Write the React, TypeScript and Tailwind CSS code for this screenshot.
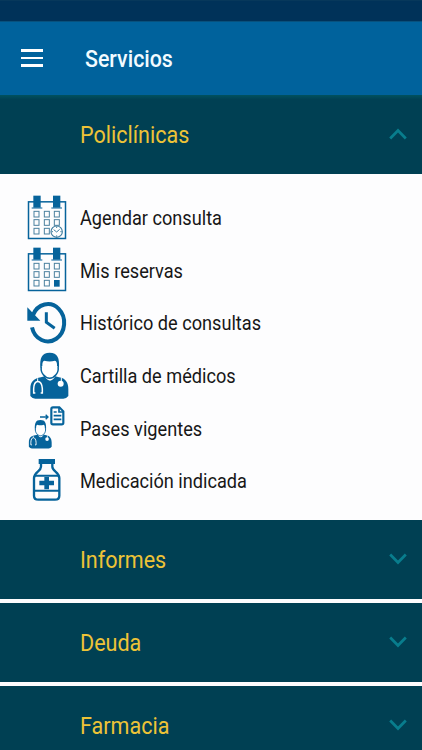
import { useState } from "react";
import type { ReactNode } from "react";
import clsx from "clsx";

interface Service {
  label: string;
  icon: ReactNode;
}

interface Section {
  id: string;
  label: string;
  items: Service[];
}

function Icon({ viewBox, children }: { viewBox: string; children: ReactNode }) {
  return (
    <svg viewBox={viewBox} className="w-[60px] h-full shrink-0 text-[#06639b]" fill="none" stroke="currentColor">
      {children}
    </svg>
  );
}

function CalendarBase() {
  return (
    <>
      <rect x="25.5" y="49.5" width="111" height="110" strokeWidth="4.5" />
      <path d="M35 68h32M94 68h32" strokeWidth="3.5" />
      <rect x="40" y="31" width="22" height="36" fill="currentColor" stroke="none" />
      <rect x="99" y="31" width="22" height="36" fill="currentColor" stroke="none" />
      {[78, 103, 129].map((y) =>
        [42, 73, 103].map((x) =>
          y === 129 && x === 103 ? null : (
            <rect key={`${x}-${y}`} x={x} y={y} width="15" height="17" stroke="#4b819f" strokeWidth="3" />
          )
        )
      )}
    </>
  );
}

const CalendarClockIcon = () => (
  <Icon viewBox="0 20 180 158">
    <CalendarBase />
    <circle cx="110" cy="139" r="17" fill="#fff" stroke="#3f7d9f" strokeWidth="3.5" />
    <path d="M101 133l9 7 9-8M110 124v4M110 150v4M95 139h4M121 139h4" stroke="#3f7d9f" strokeWidth="3" />
  </Icon>
);

const CalendarIcon = () => (
  <Icon viewBox="0 13 180 158">
    <g transform="translate(0 -7)">
      <CalendarBase />
      <rect x="102" y="128" width="17" height="20" fill="currentColor" stroke="none" />
    </g>
  </Icon>
);

const HistoryIcon = () => (
  <Icon viewBox="0 6 180 158">
    <path d="M39 60A49 56 0 1 1 36 97" strokeWidth="12" />
    <path d="M22 37v40h39z" fill="currentColor" stroke="none" />
    <path d="M79 52v30l25 18" strokeWidth="9" />
  </Icon>
);

function DoctorShape() {
  return (
    <>
      <path
        d="M31 152V130C31 109 42 99 63 96L74 93Q90 119 106 93L117 96C137 99 145 112 145 132V152Q139 160 130 160H46Q37 160 31 152Z"
        fill="currentColor"
        stroke="none"
      />
      <path d="M65 58C63 81 74 99 89 99S115 81 113 58Q105 46 89 46T65 58Z" fill="#fff" stroke="none" />
      <path d="M64 65C60 82 76 99 89 99S118 82 114 65" strokeWidth="4.5" />
      <path
        d="M61 68C59 38 65 22 89 22S119 38 117 68L111 62Q112 48 105 46Q89 51 73 46Q66 48 67 62Z"
        fill="currentColor"
        stroke="none"
      />
      <path d="M53 99V110" stroke="#fff" strokeWidth="3" />
      <path d="M46 143H41V130C42 101 65 101 67 130V143H62" stroke="#fff" strokeWidth="4.5" />
      <path d="M124 96V110" stroke="#fff" strokeWidth="3" />
      <circle cx="122" cy="115" r="9" fill="#fff" stroke="none" />
    </>
  );
}

const DoctorIcon = () => (
  <Icon viewBox="0 14 180 158">
    <DoctorShape />
  </Icon>
);

const ReferralIcon = () => (
  <Icon viewBox="0 7 180 158">
    <g transform="translate(8 47) scale(.6 .62)">
      <DoctorShape />
    </g>
    <path d="M60 52h23M77 45l7 7-7 7" strokeWidth="4" />
    <path d="M99 23h19l12 12v34q0 5-5 5H99q-5 0-5-5V28q0-5 5-5z" strokeWidth="6.5" />
    <path d="M117 24v13h12" strokeWidth="5" />
    <path d="M101 37h9M101 48h23M101 59h23" strokeWidth="5" />
  </Icon>
);

const MedicineIcon = () => (
  <Icon viewBox="0 15 180 158">
    <rect x="59" y="30" width="43" height="9" strokeWidth="6" fill="currentColor" />
    <path
      d="M63 41V50C63 64 42 66 42 84V137Q42 149 55 149H105Q118 149 118 137V84C118 66 97 64 97 50V41"
      strokeWidth="7"
    />
    <path d="M42 77H118M42 122H118" strokeWidth="6" />
    <path d="M80 81V118M58 99H102" strokeWidth="14" />
  </Icon>
);

const sections: Section[] = [
  {
    id: "policlinicas",
    label: "Policlínicas",
    items: [
      { label: "Agendar consulta", icon: <CalendarClockIcon /> },
      { label: "Mis reservas", icon: <CalendarIcon /> },
      { label: "Histórico de consultas", icon: <HistoryIcon /> },
      { label: "Cartilla de médicos", icon: <DoctorIcon /> },
      { label: "Pases vigentes", icon: <ReferralIcon /> },
      { label: "Medicación indicada", icon: <MedicineIcon /> },
    ],
  },
  { id: "informes", label: "Informes", items: [] },
  { id: "deuda", label: "Deuda", items: [] },
  { id: "farmacia", label: "Farmacia", items: [] },
];

export default function App() {
  const [openId, setOpenId] = useState("policlinicas");

  return (
    <div className="flex flex-col h-[750px] overflow-hidden bg-[#fdfdfe] font-['Roboto',sans-serif]">
      <div className="h-[21px] shrink-0 bg-[#003259] border-t border-[#07385b]" />

      <header className="flex items-center h-[74px] shrink-0 bg-[#00629c] pl-[21px] border-t border-[#08517d]">
        <button aria-label="Menú" className="flex flex-col gap-[5px] w-[22px] mr-[42px] -mt-px">
          <span className="h-[2.5px] bg-white" />
          <span className="h-[2.5px] bg-white" />
          <span className="h-[2.5px] bg-white" />
        </button>
        <h1 className="text-2xl font-medium text-[#f2fbff] origin-left scale-x-[0.89]">Servicios</h1>
      </header>

      <main className="flex flex-col gap-1">
        {sections.map((section) => {
          const open = openId === section.id;
          return (
            <section key={section.id} className={clsx("shrink-0", open && "-mb-1")}>
              <button
                onClick={() => setOpenId(open ? "" : section.id)}
                className={clsx(
                  "flex items-center justify-between w-full h-[79px] pl-20 pr-[15px] bg-[#004053]",
                  open && "bg-linear-to-b from-[#00525f] to-[#004053] to-6%"
                )}
              >
                <span className="text-2xl text-[#edc337] origin-left scale-x-[0.897] mt-px">{section.label}</span>
                <svg
                  viewBox="0 0 18 12"
                  className={clsx("w-[18px] h-3 -mt-0.5", open && "rotate-180")}
                  fill="none"
                  stroke="#087d8d"
                  strokeWidth="2.7"
                >
                  <path d="M1.2 1.5L9 9.5L16.8 1.5" />
                </svg>
              </button>
              {open && section.items.length > 0 && (
                <ul className="h-[346px] pt-[17.6px]">
                  {section.items.map((item) => (
                    <li key={item.label} className="flex items-center h-[52.67px] pl-5">
                      {item.icon}
                      <span className="text-xl text-[#171717] origin-left scale-x-[0.908] whitespace-nowrap">{item.label}</span>
                    </li>
                  ))}
                </ul>
              )}
            </section>
          );
        })}
      </main>
    </div>
  );
}
